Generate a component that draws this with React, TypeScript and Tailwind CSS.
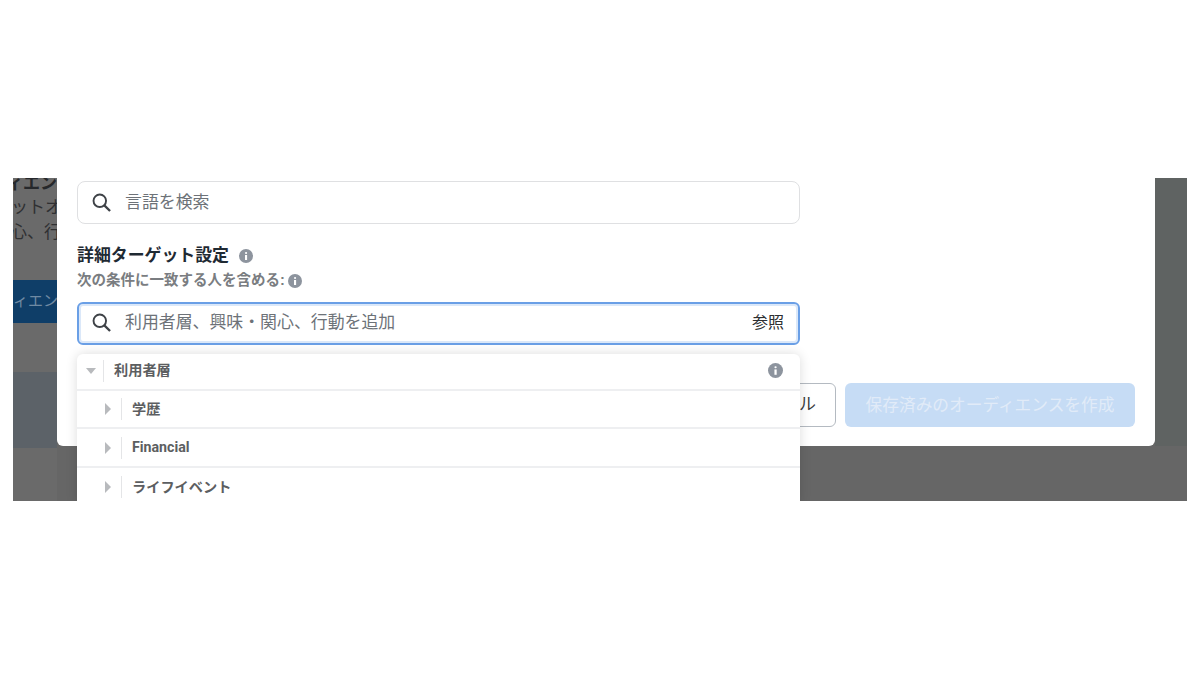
import { ReactNode } from "react";

const SearchIcon = () => (
  <svg width="19" height="19" viewBox="0 0 20 20" fill="none" stroke="#3e4247" strokeWidth="2" className="shrink-0">
    <circle cx="8.2" cy="8.2" r="6.6" />
    <path d="M13 13 L19 19" strokeWidth="2.4" />
  </svg>
);

const InfoIcon = ({ size = 14 }: { size?: number }) => (
  <svg width={size} height={size} viewBox="0 0 14 14" className="shrink-0">
    <circle cx="7" cy="7" r="7" fill="#8d949e" />
    <rect x="6" y="6" width="2.1" height="5" fill="#fff" />
    <rect x="6" y="3" width="2.1" height="2" rx="1" fill="#fff" />
  </svg>
);

const SearchField = ({ label, focused, children }: { label: string; focused?: boolean; children?: ReactNode }) => (
  <div
    className={
      focused
        ? "flex h-[43px] items-center gap-[14px] rounded-md border-2 border-[#6a9fe6] pb-[2px] pl-[13px] pr-[14px] shadow-[inset_0_0_0_2px_#dbe8f9]"
        : "flex h-[43px] items-center gap-[14px] rounded-lg border-[1.5px] border-[#dfe0e2] pl-[14px] pr-[15px]"
    }
  >
    <SearchIcon />
    <span className="flex-1 text-[16.9px] text-[#6d7278]">{label}</span>
    {children}
  </div>
);

const TreeRow = ({ label, open, last }: { label: string; open?: boolean; last?: boolean }) => (
  <div
    className={`flex shrink-0 items-center ${last ? "" : "border-b-2 border-[#eeeff1]"} ${
      open ? "h-[36.5px] pb-[1px] pl-[9px]" : "h-[38.5px] pl-[28px] pt-[1px]"
    }`}
  >
    {open ? (
      <span className="h-0 w-0 border-x-[5.5px] border-t-[6px] border-x-transparent border-t-[#b8babd]" />
    ) : (
      <span className="h-0 w-0 border-y-[6px] border-l-[6px] border-y-transparent border-l-[#b8babd]" />
    )}
    <span className={`h-[22px] w-px bg-[#e4e5e7] ${open ? "ml-[7px]" : "ml-[10px]"}`} />
    <span className="ml-[10px] flex-1 font-['Roboto','Noto_Sans_CJK_JP',sans-serif] text-[14.2px] font-bold text-[#5c5e61]">{label}</span>
    {open && (
      <span className="mr-[17px]">
        <InfoIcon size={15} />
      </span>
    )}
  </div>
);

export default function App() {
  return (
    <div className="h-[679px] w-[1200px] overflow-hidden bg-white pl-[13px] pr-[13px] pt-[178px] font-['Liberation_Sans','Noto_Sans_CJK_JP',sans-serif]">
      <div className="relative flex h-[323px] overflow-hidden bg-[#666666]">
        {/* page behind the modal, cut off by it */}
        <div className="flex h-full w-[44px] shrink-0 flex-col overflow-hidden whitespace-nowrap bg-[#6a6a6a] text-[#26282b]">
          <div className="-mt-[6px] ml-[-7px] text-[17px] font-bold leading-6">ィエン</div>
          <div className="ml-[-2px] text-[17px] leading-6 text-[#2f3032]">ットオ</div>
          <div className="ml-[-3px] text-[17px] leading-[25px] text-[#2f3032]">心、行</div>
          <div className="mt-[35px] flex h-[43px] shrink-0 items-center bg-[#0f3e68] text-[15px] text-[#6f8aa3]">ィエン</div>
          <div className="mt-[49px] h-[76px] shrink-0 bg-[#5c6268]" />
        </div>

        <div className="flex h-[268px] w-[1098px] shrink-0 flex-col rounded-b-md bg-white pl-[20px] pr-[20px] pt-[3px]">
          <div className="w-[723px]">
            <SearchField label="言語を検索" />
            <div className="mt-[21px] flex h-[22px] items-center gap-[10px]">
              <span className="text-[16.9px] font-bold text-[#1f2a33]">詳細ターゲット設定</span>
              <InfoIcon />
            </div>
            <div className="mt-[4px] flex h-[20px] items-center gap-[3px]">
              <span className="text-[14.5px] font-bold text-[#7a7d81]">次の条件に一致する人を含める:</span>
              <InfoIcon />
            </div>
            <div className="mt-[11px]">
              <SearchField label="利用者層、興味・関心、行動を追加" focused>
                <span className="text-base text-[#2d2f31]">参照</span>
              </SearchField>
            </div>
          </div>
          <div className="mt-[38px] flex justify-end gap-[9px]">
            <button className="h-[44px] w-[125px] rounded-md border border-[#b4bac1] bg-white text-[17px] text-[#3a3d40]">キャンセル</button>
            <button className="h-[44px] w-[290px] rounded-md bg-[#c6dcf5] pt-[2px] text-[16.7px] text-[#e1ebf8]">保存済みのオーディエンスを作成</button>
          </div>
        </div>

        <div className="w-[32px] shrink-0">
          <div className="h-[268px] bg-[#5f6362]" />
        </div>

        {/* suggestion menu hanging over the modal */}
        <div className="absolute left-[64px] top-[176px] flex h-[150px] w-[723px] flex-col overflow-hidden rounded-t-md bg-white shadow-[0_0_12px_rgba(0,0,0,0.14)]">
          <TreeRow label="利用者層" open />
          <TreeRow label="学歴" />
          <TreeRow label="Financial" />
          <TreeRow label="ライフイベント" last />
        </div>
      </div>
    </div>
  );
}
